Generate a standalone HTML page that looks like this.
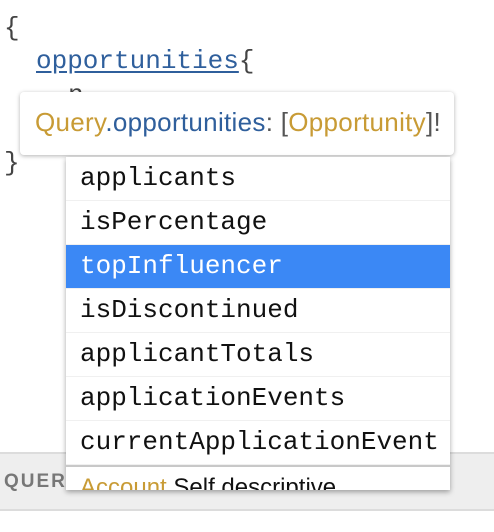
<!DOCTYPE html>
<html><head><style>
body{margin:0;width:494px;height:532px;background:#fff;position:relative;overflow:hidden;font-family:"Liberation Mono",monospace;}
.code{position:absolute;font-size:26px;color:#444;white-space:pre;line-height:30px;}
.bar{position:absolute;left:0;top:452px;width:494px;height:59px;background:#eeeeee;border-top:2px solid #dcdcdc;border-bottom:2px solid #dcdcdc;box-sizing:border-box;}
.bar span{position:absolute;left:4px;top:17px;font-family:"Liberation Sans",sans-serif;font-weight:bold;font-size:19px;letter-spacing:2px;color:#777;}
.tip{position:absolute;left:20px;top:92px;width:434px;height:63px;background:#fff;border-radius:4px;box-shadow:0 1px 4px rgba(0,0,0,.3);font-family:"Liberation Sans",sans-serif;font-size:26px;box-sizing:border-box;padding:15px 0 0 15px;color:#2f5f9c;white-space:nowrap;letter-spacing:0.3px;}
.y{color:#c89b35}.g{color:#555}
.dd{position:absolute;left:66px;top:157px;width:384px;height:333px;background:#fff;box-shadow:0 2px 5px rgba(0,0,0,.35);overflow:hidden;}
.row{height:44px;box-sizing:border-box;border-bottom:1px solid #f0f0f0;font-size:26px;line-height:43px;padding-left:14px;color:#111;white-space:nowrap;}
.sel{background:#3b88f5;color:#fff;}
.desc{border-top:2px solid #c8c8c8;padding-left:14px;font-family:"Liberation Sans",sans-serif;font-size:24px;line-height:42px;color:#111;white-space:nowrap;}
</style></head><body>
<div class="code" style="left:4px;top:13px">{</div>
<div class="code" style="left:36px;top:46px"><span style="color:#2f5f9c;text-decoration:underline;text-underline-offset:3px">opportunities</span>{</div>
<div class="code" style="left:68px;top:80px">n</div>
<div class="code" style="left:4px;top:148px">}</div>
<div class="bar"><span>QUERY VARIABLES</span></div>
<div class="tip"><span class="y">Query</span>.opportunities<span class="g">: [</span><span class="y">Opportunity</span><span class="g">]!</span></div>
<div class="dd">
<div class="row">applicants</div>
<div class="row">isPercentage</div>
<div class="row sel">topInfluencer</div>
<div class="row">isDiscontinued</div>
<div class="row">applicantTotals</div>
<div class="row">applicationEvents</div>
<div class="row">currentApplicationEvent</div>
<div class="desc"><span class="y">Account</span> Self descriptive</div>
</div>
</body></html>
